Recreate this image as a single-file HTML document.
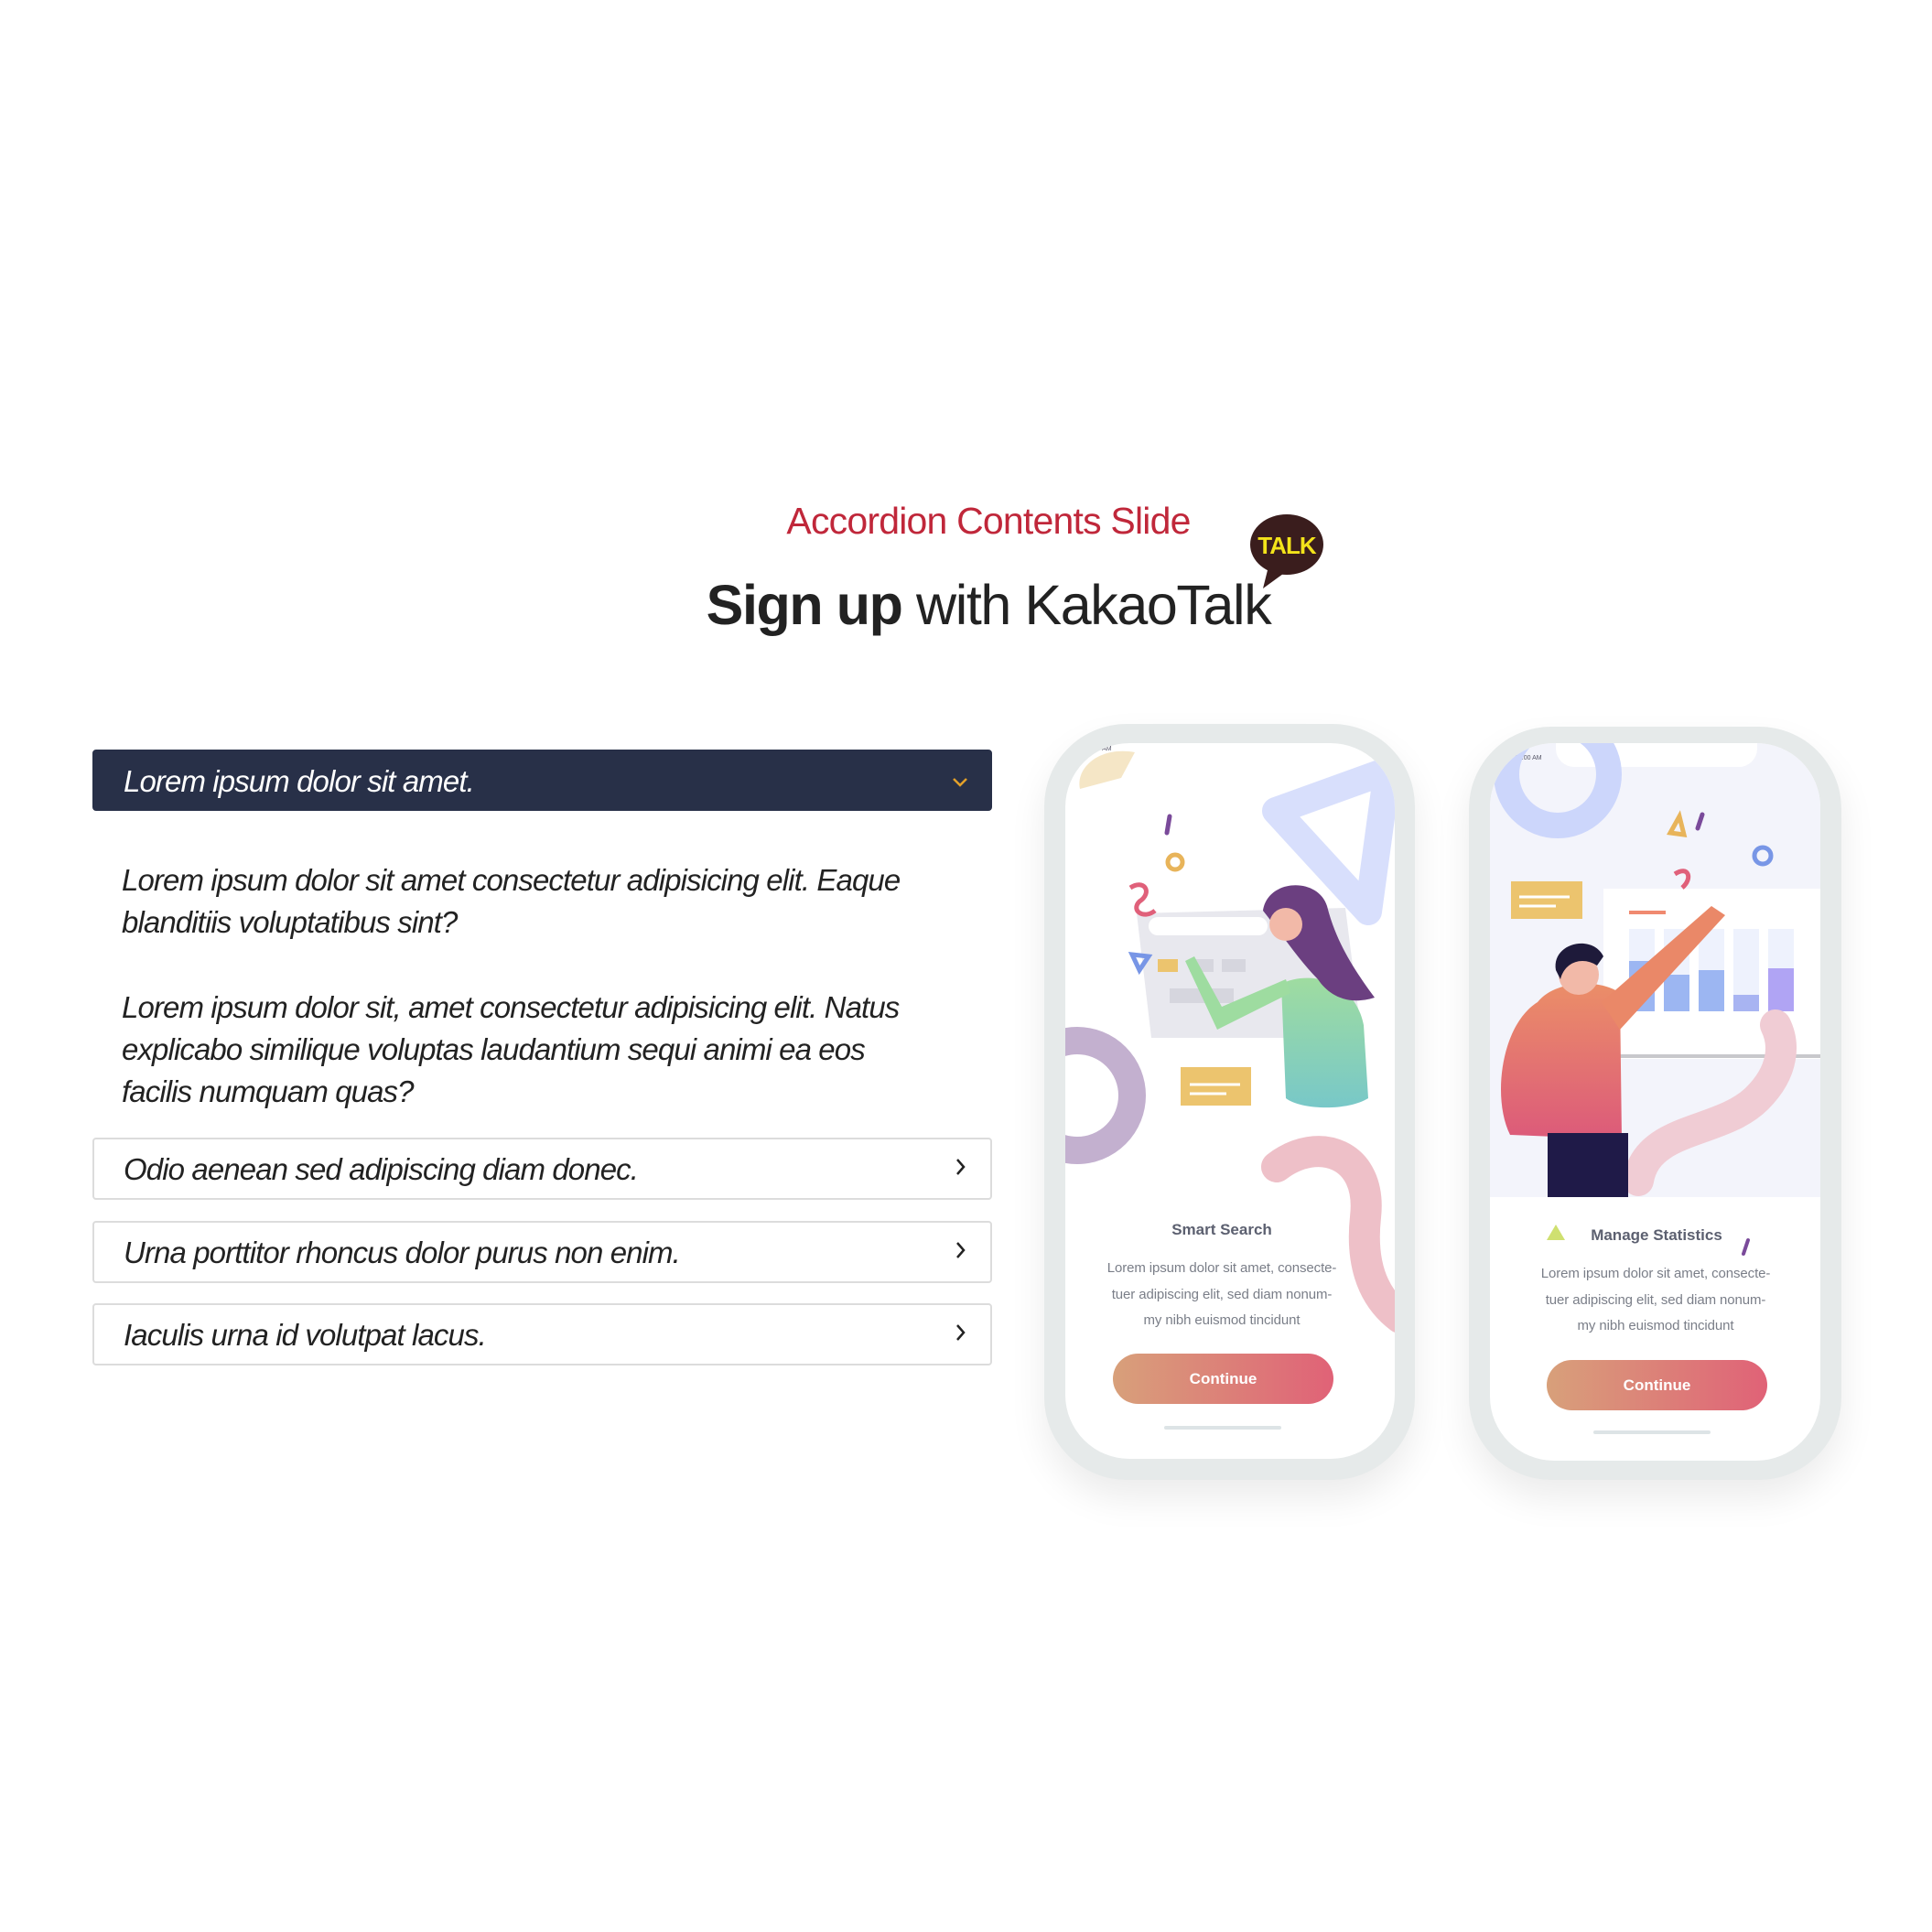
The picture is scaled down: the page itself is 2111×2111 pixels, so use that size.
<!DOCTYPE html>
<html><head><meta charset="utf-8">
<style>
html,body{margin:0;padding:0;background:#fff;}
body{width:2111px;height:2111px;position:relative;overflow:hidden;font-family:"Liberation Sans",sans-serif;}
.abs{position:absolute;}
.sub{left:0;width:2160px;text-align:center;top:546px;font-size:41px;color:#c0273a;letter-spacing:-0.8px;}
.title{left:0;width:2160px;text-align:center;top:626px;font-size:61px;color:#222;letter-spacing:-1.4px;}
.title b{font-weight:700;}
.acc{left:101px;width:983px;box-sizing:border-box;border:2px solid #dcdcdc;border-radius:4px;height:68px;font-style:italic;font-size:33px;letter-spacing:-0.9px;color:#222;}
.acc span{position:absolute;left:32px;top:14px;}
.acc.act{background:#283048;border-color:#283048;color:#fff;height:67px;}
.chev{position:absolute;right:22px;top:22px;}
.para{left:133px;width:910px;font-style:italic;font-size:33px;line-height:46px;letter-spacing:-0.9px;color:#222;}
.phone{border-radius:90px;background:#e6eaea;box-shadow:0 20px 40px rgba(0,0,0,0.08);}
.screen{border-radius:70px;background:#fff;overflow:hidden;}
.ptitle{font-weight:700;font-size:17px;color:#5c6070;text-align:center;}
.ptext{font-size:15px;line-height:28.5px;color:#7a7e88;text-align:center;letter-spacing:-0.1px;}
.btn{border-radius:28px;background:linear-gradient(90deg,#d8a07a,#e06277);color:#fff;font-weight:700;font-size:17px;text-align:center;}
.bar{height:4px;border-radius:2px;background:#dde4e6;}
</style></head><body>

<div class="abs sub">Accordion Contents Slide</div>
<div class="abs title"><b>Sign up</b> with KakaoTalk</div>
<svg class="abs" style="left:1360px;top:555px" width="100" height="95" viewBox="0 0 100 95">
<path d="M25 68 L20 88 L42 72 Z" fill="#3a1d1d"/>
<ellipse cx="46" cy="40" rx="40" ry="33" fill="#3a1d1d"/>
<text x="46" y="50" text-anchor="middle" font-family="Liberation Sans" font-weight="bold" font-size="26" letter-spacing="-1" fill="#f3e31a">TALK</text>
</svg>

<div class="abs acc act" style="top:819px"><span>Lorem ipsum dolor sit amet.</span>
<svg class="chev" width="22" height="22" viewBox="0 0 22 22"><path d="M4 8 L11 15 L18 8" fill="none" stroke="#e3a02a" stroke-width="2.5"/></svg></div>
<div class="abs para" style="top:939px">Lorem ipsum dolor sit amet consectetur adipisicing elit. Eaque blanditiis voluptatibus sint?</div>
<div class="abs para" style="top:1078px">Lorem ipsum dolor sit, amet consectetur adipisicing elit. Natus explicabo similique voluptas laudantium sequi animi ea eos<br>facilis numquam quas?</div>
<div class="abs acc" style="top:1243px"><span>Odio aenean sed adipiscing diam donec.</span>
<svg class="chev" style="top:18px" width="22" height="24" viewBox="0 0 22 24"><path d="M8 4 L15 12 L8 20" fill="none" stroke="#222" stroke-width="2.5"/></svg></div>
<div class="abs acc" style="top:1334px"><span>Urna porttitor rhoncus dolor purus non enim.</span>
<svg class="chev" style="top:18px" width="22" height="24" viewBox="0 0 22 24"><path d="M8 4 L15 12 L8 20" fill="none" stroke="#222" stroke-width="2.5"/></svg></div>
<div class="abs acc" style="top:1424px"><span>Iaculis urna id volutpat lacus.</span>
<svg class="chev" style="top:18px" width="22" height="24" viewBox="0 0 22 24"><path d="M8 4 L15 12 L8 20" fill="none" stroke="#222" stroke-width="2.5"/></svg></div>

<div class="abs phone" style="left:1141px;top:791px;width:405px;height:826px"></div>
<div class="abs screen" style="left:1164px;top:812px;width:360px;height:782px"></div>
<div class="abs phone" style="left:1605px;top:794px;width:407px;height:823px"></div>
<div class="abs screen" style="left:1628px;top:812px;width:361px;height:784px"></div>
<div class="abs" style="left:1628px;top:812px;width:361px;height:496px;background:#f3f4fb;border-radius:70px 70px 0 0"></div>
<div class="abs" style="left:1700px;top:812px;width:220px;height:26px;background:#fff;border-radius:0 0 20px 20px"></div>

<svg class="abs" style="left:0;top:0" width="2111" height="2111">
<defs>
<clipPath id="c1"><rect x="1164" y="812" width="360" height="782" rx="70"/></clipPath>
<clipPath id="c2"><rect x="1628" y="812" width="361" height="784" rx="70"/></clipPath>
<linearGradient id="g1" x1="0" y1="0" x2="0" y2="1"><stop offset="0" stop-color="#9fdca0"/><stop offset="1" stop-color="#78c8c8"/></linearGradient>
<linearGradient id="g2" x1="0" y1="0" x2="0" y2="1"><stop offset="0" stop-color="#eb8e68"/><stop offset="1" stop-color="#dc5a7a"/></linearGradient>
</defs>
<g clip-path="url(#c1)">
<text x="1185" y="820" font-size="7" fill="#556">10:00 AM</text>
<path d="M1180 862 C1175 840 1200 815 1240 822 L1225 850 Z" fill="#f5e6c6"/>
<path d="M1394 886 L1516 842 L1495 996 Z" fill="none" stroke="#d8dffc" stroke-width="30" stroke-linejoin="round"/>
<circle cx="1177" cy="1197" r="60" fill="none" stroke="#c3b0cf" stroke-width="30"/>
<path d="M1395 1275 C1440 1240 1500 1260 1492 1330 C1485 1395 1510 1425 1530 1440" fill="none" stroke="#eec0c8" stroke-width="34" stroke-linecap="round"/>
<path d="M1242 998 L1470 992 L1488 1134 L1258 1134 Z" fill="#e8e8ee"/>
<rect x="1255" y="1002" width="130" height="20" rx="10" fill="#fff"/>
<rect x="1265" y="1048" width="22" height="14" fill="#ecc46e"/>
<rect x="1300" y="1048" width="26" height="14" fill="#d6d6de"/>
<rect x="1335" y="1048" width="26" height="14" fill="#d6d6de"/>
<rect x="1278" y="1080" width="70" height="16" fill="#d6d6de"/>
<path d="M1400 1075 C1430 1060 1480 1070 1490 1120 L1495 1200 C1470 1215 1420 1212 1405 1200 Z" fill="url(#g1)"/>
<path d="M1410 1085 L1330 1125 L1295 1050 L1305 1045 L1335 1100 L1405 1070 Z" fill="#9edca0"/>
<path d="M1380 995 C1385 960 1440 958 1450 990 C1460 1030 1480 1060 1502 1090 C1470 1100 1450 1085 1440 1070 C1420 1050 1400 1020 1380 995 Z" fill="#6b3f80"/>
<circle cx="1405" cy="1010" r="18" fill="#f2b9a8"/>
<path d="M1290 1166 L1367 1166 L1367 1208 L1290 1208 Z" fill="#ecc46e"/>
<path d="M1300 1185 L1355 1185 M1300 1195 L1340 1195" stroke="#fff" stroke-width="3"/>
<circle cx="1284" cy="942" r="8" fill="none" stroke="#e8b45a" stroke-width="5"/>
<path d="M1278 892 L1275 910" stroke="#7a4a9a" stroke-width="5" stroke-linecap="round"/>
<path d="M1235 970 C1250 960 1260 975 1245 985 C1235 995 1250 1005 1262 995" fill="none" stroke="#e0607a" stroke-width="5"/>
<path d="M1237 1043 L1255 1045 L1245 1060 Z" fill="none" stroke="#7896e6" stroke-width="5"/>
</g>
<g clip-path="url(#c2)">
<text x="1655" y="830" font-size="7" fill="#556">10:00 AM</text>
<circle cx="1702" cy="846" r="56" fill="none" stroke="#ccd6fb" stroke-width="28"/>
<rect x="1752" y="971" width="237" height="186" fill="#fff"/>
<rect x="1780" y="995" width="40" height="4" fill="#f08a70"/>
<rect x="1780" y="1015" width="28" height="90" fill="#eef2fd"/><rect x="1780" y="1050" width="28" height="55" fill="#9cb6f2"/>
<rect x="1818" y="1015" width="28" height="90" fill="#eef2fd"/><rect x="1818" y="1065" width="28" height="40" fill="#9cb6f2"/>
<rect x="1856" y="1015" width="28" height="90" fill="#eef2fd"/><rect x="1856" y="1060" width="28" height="45" fill="#9cb6f2"/>
<rect x="1894" y="1015" width="28" height="90" fill="#eef2fd"/><rect x="1894" y="1087" width="28" height="18" fill="#a8b4f2"/>
<rect x="1932" y="1015" width="28" height="90" fill="#eef2fd"/><rect x="1932" y="1058" width="28" height="47" fill="#b0a4f4"/>
<rect x="1752" y="1152" width="237" height="4" fill="#c8c8cc"/>
<path d="M1790 1290 C1800 1230 1880 1240 1920 1200 C1950 1170 1950 1140 1940 1120" fill="none" stroke="#f0ccd4" stroke-width="34" stroke-linecap="round"/>
<path d="M1680 1095 C1700 1070 1750 1070 1770 1085 L1772 1245 L1650 1240 C1630 1200 1640 1120 1680 1095 Z" fill="url(#g2)"/>
<path d="M1750 1095 L1870 990 L1885 1000 L1770 1125 Z" fill="#ea8868"/>
<rect x="1691" y="1238" width="88" height="70" fill="#1f1a48"/>
<circle cx="1725" cy="1065" r="22" fill="#f2b9a8"/>
<path d="M1700 1060 C1695 1030 1740 1020 1752 1045 L1745 1055 C1730 1045 1710 1050 1705 1070 Z" fill="#1e1a3a"/>
<path d="M1651 963 L1729 963 L1729 1004 L1651 1004 Z" fill="#ecc46e"/>
<path d="M1660 980 L1715 980 M1660 990 L1700 990" stroke="#fff" stroke-width="3"/>
<circle cx="1926" cy="935" r="9" fill="none" stroke="#7896e6" stroke-width="5"/>
<path d="M1825 910 L1835 892 L1840 912 Z" fill="none" stroke="#e8b45a" stroke-width="5"/>
<path d="M1830 955 C1845 945 1850 960 1838 970" fill="none" stroke="#e0607a" stroke-width="5"/>
<path d="M1855 905 L1860 890" stroke="#7a4a9a" stroke-width="5" stroke-linecap="round"/>
<path d="M1690 1355 L1700 1338 L1710 1355 Z" fill="#cfe070"/>
<path d="M1905 1370 L1910 1355" stroke="#7a4a9a" stroke-width="4" stroke-linecap="round"/>
</g>
</svg>

<div class="abs ptitle" style="left:1164px;width:342px;top:1334px">Smart Search</div>
<div class="abs ptext" style="left:1165px;width:340px;top:1372px">Lorem ipsum dolor sit amet, consecte-<br>tuer adipiscing elit, sed diam nonum-<br>my nibh euismod tincidunt</div>
<div class="abs btn" style="left:1216px;top:1479px;width:241px;height:55px;line-height:55px">Continue</div>
<div class="abs bar" style="left:1272px;top:1558px;width:128px"></div>

<div class="abs ptitle" style="left:1660px;width:300px;top:1340px">Manage Statistics</div>
<div class="abs ptext" style="left:1638px;width:342px;top:1378px">Lorem ipsum dolor sit amet, consecte-<br>tuer adipiscing elit, sed diam nonum-<br>my nibh euismod tincidunt</div>
<div class="abs btn" style="left:1690px;top:1486px;width:241px;height:55px;line-height:55px">Continue</div>
<div class="abs bar" style="left:1741px;top:1563px;width:128px"></div>
</body></html>
